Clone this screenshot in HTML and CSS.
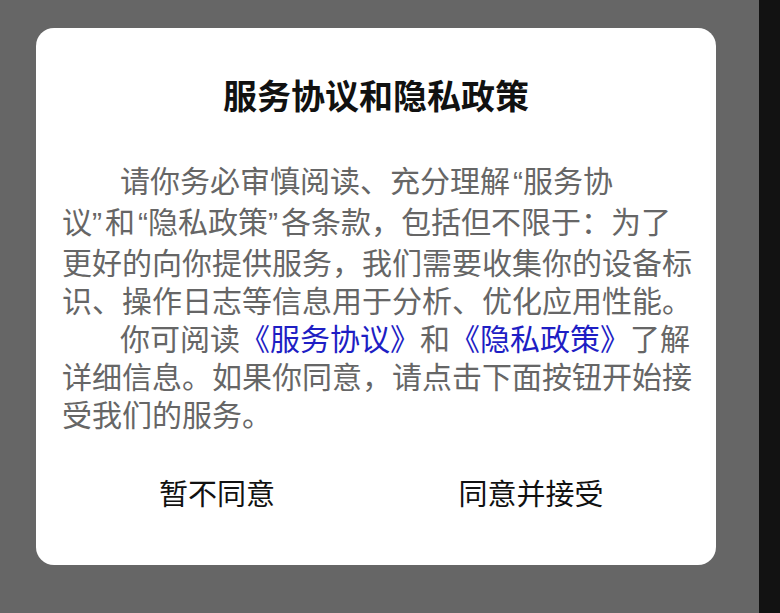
FILE: index.html
```html
<!DOCTYPE html>
<html lang="zh-CN">
<head>
<meta charset="utf-8">
<title>服务协议和隐私政策</title>
<link rel="stylesheet" href="styles.css">
</head>
<body>
<div class="screen">
  <main class="stage">
    <section class="dialog">
      <h1 class="title">服务协议和隐私政策</h1>
      <div class="content">
        <p class="para">请你务必审慎阅读、充分理解<span class="q ql">“</span>服务协<br>议<span class="q qr">”</span>和<span class="q ql">“</span>隐私政策<span class="q qr">”</span>各条款，包括但不限于：为了<br>更好的向你提供服务，我们需要收集你的设备标<br>识、操作日志等信息用于分析、优化应用性能。</p>
        <p class="para">你可阅读<span class="link">《服务协议》</span>和<span class="link">《隐私政策》</span>了解<br>详细信息。如果你同意，请点击下面按钮开始接<br>受我们的服务。</p>
      </div>
      <div class="actions">
        <button class="btn">暂不同意</button>
        <button class="btn">同意并接受</button>
      </div>
    </section>
  </main>
  <aside class="edge"></aside>
</div>
</body>
</html>
```

FILE: styles.css
```css
html, body {
  margin: 0;
  padding: 0;
  height: 100%;
}
body {
  background: #666666;
  font-family: "Noto Sans CJK SC", "Noto Sans", sans-serif;
  overflow: hidden;
}
.screen {
  display: flex;
  width: 780px;
  height: 613px;
}
.stage {
  flex: 1;
  background: #666666;
  padding: 28px 0 0 36px;
}
.edge {
  width: 21px;
  background: #121212;
}
.dialog {
  width: 680px;
  height: 537px;
  box-sizing: border-box;
  background: #ffffff;
  border-radius: 18px;
  padding: 43px 28px 0 24px;
  display: flex;
  flex-direction: column;
}
.title {
  margin: 0 0 0 4px;
  font-size: 34px;
  line-height: 48px;
  font-weight: 700;
  color: #111111;
  text-align: center;
}
.content {
  margin-top: 41px;
  padding-left: 2px;
}
.para {
  margin: 0;
  font-size: 30px;
  line-height: 38px;
  color: #666666;
  text-indent: 58px;
  white-space: nowrap;
}
.q {
  font-family: "Liberation Sans", sans-serif;
}
.ql {
  margin-left: 3px;
}
.qr {
  margin-right: 3px;
}
.link {
  color: #1e1ec4;
}
.actions {
  display: flex;
  margin-top: 30px;
}
.btn {
  flex: 1;
  height: 60px;
  border: none;
  background: transparent;
  padding: 0;
  font-family: "Noto Sans CJK SC", "Noto Sans", sans-serif;
  font-size: 29px;
  color: #111111;
}
```
